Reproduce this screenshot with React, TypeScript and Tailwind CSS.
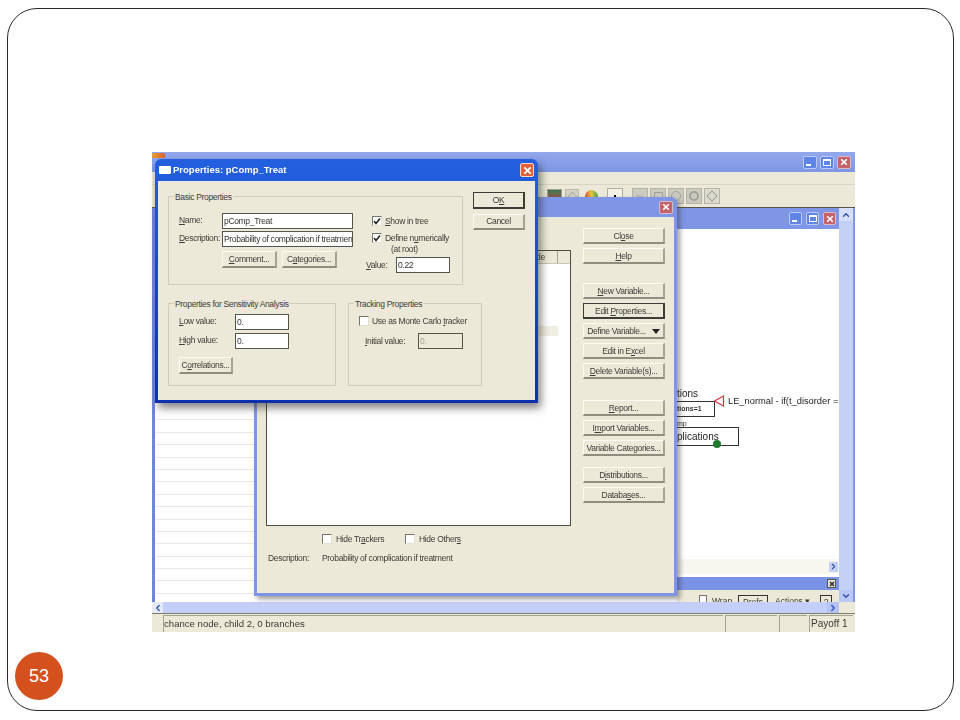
import React from 'react';
import { ChevronDown, ChevronLeft, ChevronRight, ChevronUp } from 'lucide-react';

const CloseGlyph = ({ size = 8 }: { size?: number }) => (
  <svg width={size} height={size} viewBox="0 0 10 10">
    <path d="M1.5 1.5 L8.5 8.5 M8.5 1.5 L1.5 8.5" stroke="#fff" strokeWidth="2" />
  </svg>
);

const WinControls: React.FC<{ small?: boolean }> = ({ small }) => {
  const box = small ? 'w-[13px] h-[13px]' : 'w-[14px] h-[13px]';
  return (
    <div className={small ? 'flex gap-[4px]' : 'flex gap-[3px]'}>
      <div className={`${box} rounded-[2px] bg-[#5f86e6] border border-[#b9caf5] flex items-end pl-[2px] pb-[2px]`}>
        <div className="w-[5px] h-[2px] bg-white" />
      </div>
      <div className={`${box} rounded-[2px] bg-[#5f86e6] border border-[#b9caf5] flex items-center justify-center`}>
        <div className="w-[8px] h-[7px] border border-white border-t-2" />
      </div>
      <div className={`${box} rounded-[2px] bg-[#c4636a] border border-[#dbb9c8] flex items-center justify-center`}>
        <CloseGlyph />
      </div>
    </div>
  );
};

const XpButton: React.FC<{ className?: string; focused?: boolean; children: React.ReactNode }> = ({ className = '', focused, children }) => (
  <div
    className={`flex items-center justify-center whitespace-nowrap bg-[#ece9d8] text-[#3c3c38] text-[8.5px] ${
      focused
        ? 'border border-[#3c3c38] border-b-2 border-r-2'
        : 'border-t border-l border-t-[#fbfaf3] border-l-[#fbfaf3] border-b-2 border-r-2 border-b-[#8f8d7d] border-r-[#a5a393]'
    } ${className}`}
  >
    <span>{children}</span>
  </div>
);

const Check: React.FC<{ checked?: boolean }> = ({ checked }) => (
  <div className="w-[10px] h-[10px] shrink-0 bg-white border border-t-[#77756a] border-l-[#77756a] border-b-[#e4e1d2] border-r-[#e4e1d2] flex items-center justify-center">
    {checked && (
      <svg width="8" height="8" viewBox="0 0 8 8">
        <path d="M1 4 L3 6.5 L7 1.5" fill="none" stroke="#222" strokeWidth="1.6" />
      </svg>
    )}
  </div>
);

const Field: React.FC<{ className?: string; disabled?: boolean; children: React.ReactNode }> = ({ className = '', disabled, children }) => (
  <div
    className={`h-[16px] flex items-center px-[1px] whitespace-nowrap overflow-hidden text-[8.5px] border border-[#55544c] ${
      disabled ? 'bg-[#ece9d8] text-[#a9a798]' : 'bg-white text-[#33332f]'
    } ${className}`}
  >
    {children}
  </div>
);

const GroupBox: React.FC<{ title: string; className?: string; children: React.ReactNode }> = ({ title, className = '', children }) => (
  <div className={`relative border border-[#cfccbc] ${className}`}>
    <span className="absolute left-[5px] -top-[5px] px-[1px] bg-[#ece9d8] text-[8.5px] leading-[11px] text-[#3c3c38] whitespace-nowrap">
      {title}
    </span>
    {children}
  </div>
);

const sideButtons: { gap: string; focused?: boolean; label: React.ReactNode }[] = [
  { gap: 'mt-0', label: <>Cl<u>o</u>se</> },
  { gap: 'mt-[4px]', label: <><u>H</u>elp</> },
  { gap: 'mt-[19px]', label: <><u>N</u>ew Variable...</> },
  { gap: 'mt-[4px]', focused: true, label: <>Edit <u>P</u>roperties...</> },
  { gap: 'mt-[4px]', label: <span className="flex items-center gap-[6px]">Define Variable... <span className="border-x-[4px] border-x-transparent border-t-[5px] border-t-[#222]" /></span> },
  { gap: 'mt-[4px]', label: <>Edit in E<u>x</u>cel</> },
  { gap: 'mt-[4px]', label: <><u>D</u>elete Variable(s)...</> },
  { gap: 'mt-[21px]', label: <><u>R</u>eport...</> },
  { gap: 'mt-[4px]', label: <>I<u>m</u>port Variables...</> },
  { gap: 'mt-[4px]', label: <>Variable Categories...</> },
  { gap: 'mt-[11px]', label: <>D<u>i</u>stributions...</> },
  { gap: 'mt-[4px]', label: <>Databa<u>s</u>es...</> },
];

const Toolbar = () => (
  <div className="h-[23px] flex items-center pl-[395px] bg-[#ece9d8] border-b border-[#55544c]">
    <div className="w-[15px] h-[14px] border border-[#9f9d90] bg-gradient-to-b from-[#2f7a54] to-[#a8343a]" />
    <div className="w-[14px] h-[14px] ml-[3px] border border-[#bdbbae] bg-[#d3d1c6] flex items-center justify-center">
      <div className="w-[7px] h-[7px] rotate-45 border border-[#aeac9f]" />
    </div>
    <div className="w-[13px] h-[13px] ml-[6px] rounded-t-full bg-gradient-to-r from-[#d94a36] via-[#e4c83c] to-[#3c9a50]" />
    <div className="w-[16px] h-[16px] ml-[9px] border border-[#b0ae9f] bg-[#f3f1e8] flex items-center justify-center">
      <div className="w-[2px] h-[2px] bg-black" />
    </div>
    <div className="flex gap-[2px] ml-[9px]">
      <div className="w-[16px] h-[16px] border border-[#b5b3a7] bg-[#cbcac0] flex items-center justify-center">
        <div className="w-[9px] h-[1px] bg-[#aeac9f] rotate-[20deg]" />
      </div>
      <div className="w-[16px] h-[16px] border border-[#b5b3a7] bg-[#cbcac0] flex items-center justify-center">
        <div className="w-[9px] h-[9px] border border-[#a4a296]" />
      </div>
      <div className="w-[16px] h-[16px] border border-[#b5b3a7] bg-[#cbcac0] flex items-center justify-center">
        <div className="w-[10px] h-[10px] rounded-full border border-[#a4a296]" />
      </div>
      <div className="w-[16px] h-[16px] border border-[#b5b3a7] bg-[#cbcac0] flex items-center justify-center">
        <div className="w-[10px] h-[10px] rounded-full border-2 border-[#a4a296]" />
      </div>
      <div className="w-[16px] h-[16px] border border-[#b5b3a7] bg-[#dcdbd0] flex items-center justify-center">
        <div className="w-[8px] h-[8px] rotate-45 border border-[#a4a296]" />
      </div>
    </div>
  </div>
);

const TreeDiagram = () => (
  <>
    <span className="absolute left-[423px] top-[159px] text-[10px] leading-[12px] text-[#222]">tions</span>
    <div className="absolute left-[423px] top-[172px] w-[38px] h-[16px] border-t border-r border-b border-[#333]" />
    <span className="absolute left-[423px] top-[175px] text-[7px] leading-[10px] font-bold text-[#333]">tions=1</span>
    <svg className="absolute left-[459px] top-[166px]" width="12" height="12" viewBox="0 0 12 12">
      <path d="M10.5 1 L1.5 6 L10.5 11 Z" fill="#fff" stroke="#d9343f" strokeWidth="1.2" />
    </svg>
    <span className="absolute left-[474px] top-[166px] text-[9.3px] leading-[12px] text-[#222] whitespace-nowrap">LE_normal - if(t_disorder =</span>
    <span className="absolute left-[423px] top-[190px] text-[7px] leading-[10px] text-[#333]">mp</span>
    <div className="absolute left-[423px] top-[198px] w-[62px] h-[19px] border-t border-r border-b border-[#333]" />
    <span className="absolute left-[423px] top-[202px] text-[10px] leading-[12px] text-[#222]">plications</span>
    <div className="absolute left-[459px] top-[211px] w-[8px] h-[8px] rounded-full bg-[#1f7a2e]" />
  </>
);

const Screenshot = () => (
  <div className="absolute left-[152px] top-[152px] w-[703px] h-[480px] overflow-hidden bg-[#ece9d8] blur-[0.4px]">
    {/* main window chrome */}
    <div className="h-[20px] bg-gradient-to-b from-[#93a8ec] to-[#7f96e6] flex items-center justify-between pr-[4px]">
      <div className="w-[13px] h-[5px] mb-[13px] rounded-[1px] bg-gradient-to-r from-[#e2a032] to-[#d9622e]" />
      <WinControls />
    </div>
    <div className="h-[13px] border-b border-[#d8d5c4]" />
    <Toolbar />

    <div className="flex h-[394px]">
      {/* left tree list */}
      <div className="w-[102px] shrink-0 flex flex-col border-l-[3px] border-[#6f86dd] bg-white pt-[200px]">
        {Array.from({ length: 15 }, (_, i) => (
          <div key={i} className="h-[12.4px] shrink-0 border-b border-[#e9e9e9]" />
        ))}
      </div>
      {/* child window, only its right part shows */}
      <div className="flex-1 flex flex-col bg-white overflow-hidden">
        <div className="h-[21px] shrink-0 bg-[#7f96e6] flex items-center justify-end pr-[3px]">
          <WinControls small />
        </div>
        <div className="flex-1 relative overflow-hidden">
          <TreeDiagram />
          <div className="absolute left-[423px] right-0 top-[330px] h-[15px] bg-[#f7f7f0] flex justify-end items-center pr-[1px]">
            <div className="w-[9px] h-[10px] bg-[#c5d0f5] flex items-center justify-center">
              <ChevronRight size={9} strokeWidth={3} className="text-[#2f4fb0]" />
            </div>
          </div>
          <div className="absolute left-[423px] right-0 top-[348px] h-[13px] bg-[#7b93e5] flex justify-end items-center pr-[3px]">
            <div className="w-[9px] h-[9px] bg-[#e4e2d6] border border-[#55544c] flex items-center justify-center text-[#222]">
              <svg width="6" height="6" viewBox="0 0 6 6"><path d="M1 1 L5 5 M5 1 L1 5" stroke="#222" strokeWidth="1.4" /></svg>
            </div>
          </div>
          <div className="absolute left-[423px] right-0 top-[361px] h-[12px] bg-[#ece9d8] pt-[5px] pl-[22px] flex items-start overflow-hidden text-[8.5px] leading-[12px] text-[#3c3c38]">
            <div className="w-[8px] h-[9px] bg-white border border-[#77756a] shrink-0" />
            <span className="ml-[5px] w-[26px] shrink-0">Wrap</span>
            <div className="w-[30px] h-[12px] shrink-0 border border-[#333] text-center">Prefs</div>
            <span className="ml-[7px] w-[45px] shrink-0">Actions ▾</span>
            <div className="w-[12px] h-[12px] shrink-0 border border-[#333] text-center">?</div>
          </div>
        </div>
      </div>
      {/* vertical scroll bar and window frame */}
      <div className="w-[16px] shrink-0 bg-[#c5d0f5] flex flex-col justify-between border-r-2 border-[#8096e6]">
        <div className="h-[13px] bg-[#d6def8] flex items-center justify-center">
          <ChevronUp size={10} strokeWidth={3} className="text-[#2f4fb0]" />
        </div>
        <div className="h-[12px] bg-[#b9c8f4] flex items-center justify-center">
          <ChevronDown size={10} strokeWidth={3} className="text-[#2f4fb0]" />
        </div>
      </div>
    </div>
    {/* bottom scroller */}
    <div className="h-[12px] flex border-b border-[#7d7b70]">
      <div className="flex-1 bg-[#c3cff7] flex justify-between items-center">
        <div className="w-[11px] h-full bg-[#e4e9fb] flex items-center justify-center">
          <ChevronLeft size={10} strokeWidth={3} className="text-[#2f4fb0]" />
        </div>
        <div className="w-[12px] h-full bg-[#b4c3f3] flex items-center justify-center">
          <ChevronRight size={10} strokeWidth={3} className="text-[#2f4fb0]" />
        </div>
      </div>
      <div className="w-[16px] bg-[#ece9d8]" />
    </div>
    {/* status bar */}
    <div className="h-[18px] flex gap-[2px] pl-[11px] pr-[2px] text-[10px] leading-[15px] text-[#3a3a36] bg-[#ece9d8] pt-[1px]">
      <div className="w-[560px] border-l border-t border-[#a5a393] text-[9.6px] whitespace-nowrap">chance node, child 2, 0 branches</div>
      <div className="w-[52px] border-l border-t border-[#a5a393]" />
      <div className="w-[28px] border-l border-t border-[#a5a393]" />
      <div className="flex-1 border-l border-t border-[#a5a393] pl-[1px] whitespace-nowrap">Payoff 1</div>
    </div>
  </div>
);

const VariablesDialog = () => (
  <div className="absolute left-[254px] top-[197px] w-[423px] h-[399px] rounded-t-[6px] bg-[#7f96e6] p-[3px] pt-0 shadow-[3px_3px_5px_rgba(60,60,60,0.5)] blur-[0.4px] tracking-[-0.33px]">
    <div className="h-[20px] flex items-center justify-end pr-[1px]">
      <div className="w-[14px] h-[13px] rounded-[2px] bg-[#c4636a] border border-[#dbb9c8] flex items-center justify-center">
        <CloseGlyph />
      </div>
    </div>
    <div className="h-[376px] bg-[#ece9d8] flex pl-[9px] pt-[11px]">
      <div className="w-[305px] shrink-0">
        <div className="relative mt-[22px] h-[276px] border border-[#4d4c45] bg-white">
          <div className="h-[13px] flex justify-end bg-[#ece9d8] border-b border-[#c9c6b6] text-[8.5px] leading-[12px] text-[#3c3c38]">
            <span className="absolute left-[269px] top-0">de</span>
            <div className="w-[13px] border-l border-[#a5a393]" />
          </div>
          <div className="mt-[62px] mr-[12px] h-[10px] bg-[#f1eee2]" />
        </div>
        <div className="flex mt-[8px] pl-[56px] text-[8.5px] leading-[10px] text-[#3c3c38]">
          <div className="flex items-center gap-[4px] w-[83px]"><Check /><span>Hide Tr<u>a</u>ckers</span></div>
          <div className="flex items-center gap-[4px]"><Check /><span>Hide Other<u>s</u></span></div>
        </div>
        <div className="flex mt-[9px] pl-[2px] text-[8.5px] leading-[10px] text-[#3c3c38]">
          <span className="w-[54px]">Description:</span>
          <span>Probability of complication if treatment</span>
        </div>
      </div>
      <div className="flex flex-col w-[82px] ml-[12px]">
        {sideButtons.map((b, i) => (
          <XpButton key={i} focused={b.focused} className={`h-[16px] pt-[1px] shrink-0 ${b.gap}`}>
            {b.label}
          </XpButton>
        ))}
      </div>
    </div>
  </div>
);

const PropertiesDialog = () => (
  <div className="absolute left-[155px] top-[159px] w-[383px] h-[244px] rounded-t-[6px] bg-gradient-to-b from-[#2360e0] to-[#0d30ae] p-[3px] pt-0 shadow-[3px_5px_8px_rgba(50,50,50,0.6)] blur-[0.4px] tracking-[-0.33px]">
    <div className="h-[22px] flex items-center pl-[1px] pr-[1px]">
      <div className="w-[12px] h-[8px] bg-white rounded-[1px] mr-[2px]" />
      <span className="flex-1 font-bold text-white text-[9.5px] tracking-[0px]">Properties: pComp_Treat</span>
      <div className="w-[14px] h-[14px] rounded-[2px] bg-[#e2603a] border border-[#f4d6c8] flex items-center justify-center">
        <CloseGlyph size={9} />
      </div>
    </div>
    <div className="h-[219px] bg-[#ece9d8] pl-[10px] pt-[15px] text-[#3c3c38] text-[8.5px]">
      <div className="flex">
        <GroupBox title="Basic Properties" className="w-[295px] h-[89px] flex pl-[10px] pt-[16px] shrink-0">
          <div className="w-[175px] shrink-0">
            <div className="flex items-center">
              <span className="w-[43px] -mt-[1px]"><u>N</u>ame:</span>
              <Field className="w-[131px]">pComp_Treat</Field>
            </div>
            <div className="flex items-center mt-[2px]">
              <span className="w-[43px] -mt-[1px] whitespace-nowrap"><u>D</u>escription:</span>
              <Field className="w-[131px]">Probability of complication if treatmen</Field>
            </div>
            <div className="flex gap-[5px] pl-[43px] mt-[4px]">
              <XpButton className="w-[55px] h-[17px]"><u>C</u>omment...</XpButton>
              <XpButton className="w-[55px] h-[17px]">C<u>a</u>tegories...</XpButton>
            </div>
          </div>
          <div className="ml-[18px] pt-[3px]">
            <div className="flex items-center gap-[3px] h-[10px]"><Check checked /><span><u>S</u>how in tree</span></div>
            <div className="flex items-center gap-[3px] h-[10px] mt-[7px]"><Check checked /><span>Define n<u>u</u>merically</span></div>
            <div className="pl-[19px] leading-[10px] mt-[1px]">(at root)</div>
            <div className="flex items-center -ml-[6px] mt-[3px]">
              <span className="w-[30px] mt-[1px]"><u>V</u>alue:</span>
              <Field className="w-[54px]">0.22</Field>
            </div>
          </div>
        </GroupBox>
        <div className="ml-[10px] flex flex-col gap-[5px] -mt-[4px]">
          <XpButton focused className="w-[52px] h-[17px]">O<u>K</u></XpButton>
          <XpButton className="w-[52px] h-[16px]">Cancel</XpButton>
        </div>
      </div>
      <div className="flex gap-[12px] mt-[18px]">
        <GroupBox title="Properties for Sensitivity Analysis" className="w-[168px] h-[83px] pl-[10px] pt-[10px] shrink-0">
          <div className="flex items-center">
            <span className="w-[56px] -mt-[1px]"><u>L</u>ow value:</span>
            <Field className="w-[54px]">0.</Field>
          </div>
          <div className="flex items-center mt-[3px]">
            <span className="w-[56px] -mt-[1px]"><u>H</u>igh value:</span>
            <Field className="w-[54px]">0.</Field>
          </div>
          <XpButton className="w-[54px] h-[17px] mt-[8px]">C<u>o</u>rrelations...</XpButton>
        </GroupBox>
        <GroupBox title="Tracking Properties" className="w-[134px] h-[83px] pl-[10px] pt-[12px]">
          <div className="flex items-center gap-[3px] h-[10px]"><Check /><span>Use as Monte Carlo <u>t</u>racker</span></div>
          <div className="flex items-center mt-[7px] pl-[6px]">
            <span className="w-[53px]"><u>I</u>nitial value:</span>
            <Field disabled className="w-[45px]">0.</Field>
          </div>
        </GroupBox>
      </div>
    </div>
  </div>
);

export default function App() {
  return (
    <div className="relative w-[960px] h-[720px] bg-white overflow-hidden font-['Liberation_Sans',sans-serif]">
      <div className="absolute left-[7px] top-[8px] w-[947px] h-[703px] rounded-[30px] border border-[#2a2a2a]" />
      <Screenshot />
      <VariablesDialog />
      <PropertiesDialog />
      <div className="absolute left-[15px] top-[652px] w-[48px] h-[48px] rounded-full bg-[#d4511e] flex items-center justify-center text-white text-[18px]">
        53
      </div>
    </div>
  );
}
